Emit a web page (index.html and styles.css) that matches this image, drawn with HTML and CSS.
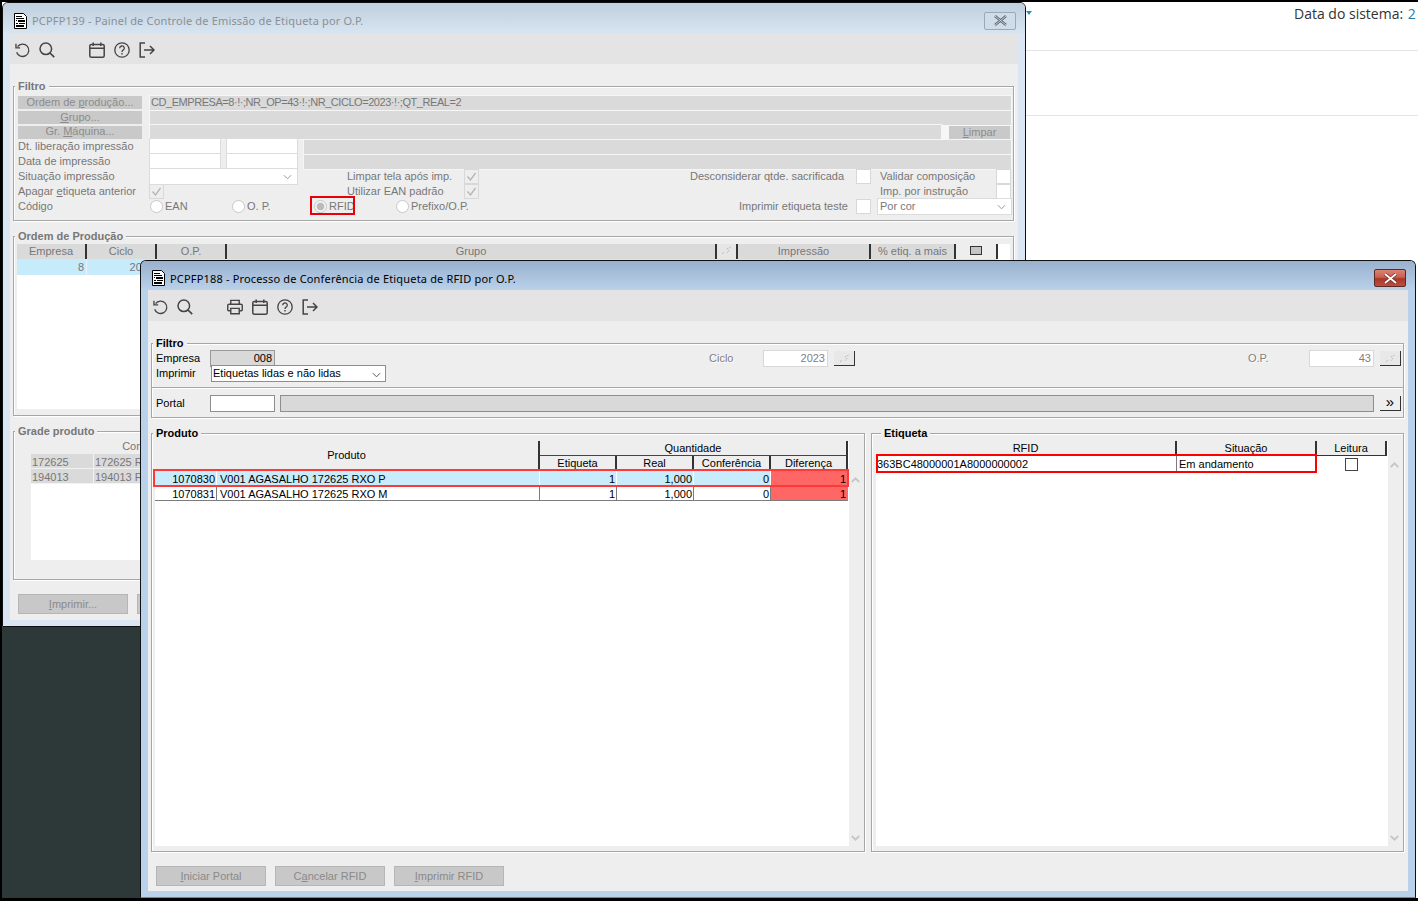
FILE: index.html
```html
<!DOCTYPE html>
<html lang="pt-BR">
<head>
    <meta charset="UTF-8">
    <meta name="viewport" content="width=device-width, initial-scale=1.0">
    <title>PCPFP188</title>
    <link rel="stylesheet" href="styles.css">
</head>
<body>
<svg class="defs" width="0" height="0">
  <symbol id="i-doc" viewBox="0 0 13 16">
    <path d="M.5.5h9l3 3v12H.5z" fill="#fff" stroke="#000"/>
    <path d="M2 3h6v1H2zM2 5h8v1H2zM4 7h7v2H4zM2 7h1v1H2zM2 10h2v1H2zM5 10h6v1H5zM2 12h8v2H2z" fill="#000"/>
  </symbol>
  <symbol id="i-undo" viewBox="0 0 18 16">
    <path d="M4 4.2A7 7 0 1 1 3 10.500" fill="none" stroke="#444" stroke-width="1.500"/>
    <path d="M2.200 1v4.700h4.700" fill="none" stroke="#444" stroke-width="1.500"/>
  </symbol>
  <symbol id="i-search" viewBox="0 0 16 16">
    <circle cx="6.800" cy="6.800" r="5.800" fill="none" stroke="#444" stroke-width="1.500"/>
    <path d="M11 11l4.200 4.200" stroke="#444" stroke-width="1.700"/>
  </symbol>
  <symbol id="i-print" viewBox="0 0 17 16">
    <path d="M4 5V1h9v4M4 12H1.800a1 1 0 0 1-1-1V6.500a1.500 1.500 0 0 1 1.500-1.500h12.400a1.500 1.500 0 0 1 1.500 1.500V11a1 1 0 0 1-1 1H13M4 9.500h9v5.700H4z" fill="none" stroke="#444" stroke-width="1.500"/>
  </symbol>
  <symbol id="i-cal" viewBox="0 0 16 16">
    <rect x=".8" y="2.500" width="14.400" height="12.700" rx="1.500" fill="none" stroke="#444" stroke-width="1.500"/>
    <path d="M1 6.200h14M4.200.5v3.500M11.800.5v3.500" stroke="#444" stroke-width="1.500"/>
  </symbol>
  <symbol id="i-help" viewBox="0 0 16 16">
    <circle cx="8" cy="8" r="7.200" fill="none" stroke="#444" stroke-width="1.300"/>
    <path d="M5.700 6.200a2.300 2.200 0 1 1 3.400 1.900c-.8.500-1.100.9-1.100 1.800" fill="none" stroke="#444" stroke-width="1.300"/>
    <path d="M7.300 11h1.400v1.500H7.300z" fill="#444"/>
  </symbol>
  <symbol id="i-exit" viewBox="0 0 16 16">
    <path d="M6 1H1.200v14H6" fill="none" stroke="#444" stroke-width="1.500"/>
    <path d="M5 8h10M11 4l4 4-4 4" fill="none" stroke="#444" stroke-width="1.500"/>
  </symbol>
  <symbol id="i-up" viewBox="0 0 9 6">
    <path d="M.8 5L4.500 1.300 8.200 5" fill="none" stroke="#c6c6c6" stroke-width="1.800"/>
  </symbol>
  <symbol id="i-down" viewBox="0 0 9 6">
    <path d="M.8 1l3.700 3.700L8.200 1" fill="none" stroke="#c6c6c6" stroke-width="1.800"/>
  </symbol>
  <symbol id="i-check" viewBox="0 0 13 13">
    <path d="M2.500 6.500l3 3.500 5-7" fill="none" stroke="#b5b5b5" stroke-width="1.300"/>
  </symbol>
  <symbol id="i-caret" viewBox="0 0 10 6">
    <path d="M1 1l4 4 4-4" fill="none" stroke="#555" stroke-width="1.100"/>
  </symbol>
  <symbol id="i-wand" viewBox="0 0 11 9">
    <path d="M1 8l2-2M6 3l4-2M8 4L6 7" fill="none" stroke="#ababab" stroke-width="1" stroke-dasharray="1 1"/>
  </symbol>
</svg>

<div class="desk">
  <div class="back-page">
    <div class="back-row back-row-top">Data do sistema: <span class="back-date">2</span></div>
    <div class="back-row back-row-mid"></div>
  </div>
  <div class="back-caret"></div>
  <div class="back-dark"></div>

  <!-- janela de tras -->
  <div class="window win-back">
    <div class="titlebar">
      <svg class="doc-icon"><use href="#i-doc"/></svg>
      <span class="title">PCPFP139 - Painel de Controle de Emissão de Etiqueta por O.P.</span>
      <span class="win-close">
        <svg width="15" height="11" viewBox="0 0 15 11"><path d="M2 1l11 9M13 1L2 10" stroke="#5a6672" stroke-width="2.400"/><path d="M2 1l11 9M13 1L2 10" stroke="#dfe8f0" stroke-width=".8"/></svg>
      </span>
    </div>
    <div class="client">
      <div class="toolbar">
        <svg class="tool"><use href="#i-undo"/></svg>
        <svg class="tool"><use href="#i-search"/></svg>
        <span class="tool"></span>
        <svg class="tool"><use href="#i-cal"/></svg>
        <svg class="tool"><use href="#i-help"/></svg>
        <svg class="tool"><use href="#i-exit"/></svg>
      </div>

      <div class="group filtro-back">
        <div class="group-title">Filtro</div>
        <div class="row">
          <span class="btn-flat"><span>Ordem de <u>p</u>rodução...</span></span>
          <span class="bar bar-long bar-query">CD_EMPRESA=8·!·;NR_OP=43·!·;NR_CICLO=2023·!·;QT_REAL=2</span>
        </div>
        <div class="row">
          <span class="btn-flat"><span><u>G</u>rupo...</span></span>
          <span class="bar bar-long"></span>
        </div>
        <div class="row row-14">
          <span class="btn-flat"><span>Gr. <u>M</u>áquina...</span></span>
          <span class="bar bar-short"></span>
          <span class="btn-limpar"><u>L</u>impar</span>
        </div>
        <div class="row">
          <span class="lbl lbl-132">Dt. liberação impressão</span>
          <span class="input-back"></span>
          <span class="input-back"></span>
          <span class="bar bar-date"></span>
        </div>
        <div class="row">
          <span class="lbl lbl-132">Data de impressão</span>
          <span class="input-back"></span>
          <span class="input-back"></span>
          <span class="bar bar-date"></span>
        </div>
        <div class="opts">
          <span class="lbl c18">Situação impressão</span>
          <span class="select-back c150"><svg class="caret"><use href="#i-caret"/></svg></span>
          <span class="lbl c347">Limpar tela após imp.</span>
          <span class="check c465"><svg><use href="#i-check"/></svg></span>
          <span class="lbl c690">Desconsiderar qtde. sacrificada</span>
          <span class="check c857"></span>
          <span class="lbl c880">Validar composição</span>
          <span class="check c997"></span>

          <span class="lbl c18">Apagar <u>e</u>tiqueta anterior</span>
          <span class="check c150"><svg><use href="#i-check"/></svg></span>
          <span class="lbl c347"><u>U</u>tilizar EAN padrão</span>
          <span class="check c465"><svg><use href="#i-check"/></svg></span>
          <span class="lbl c880">Imp. por instrução</span>
          <span class="check c997"></span>

          <span class="lbl c18">Código</span>
          <span class="radio c150"><i></i>EAN</span>
          <span class="radio c232"><i></i>O. P.</span>
          <span class="radio radio-marked c314"><i class="on"></i>RFID</span>
          <span class="radio c396"><i></i>Prefixo/O.P.</span>
          <span class="lbl c739">Imprimir etiqueta teste</span>
          <span class="check c857"></span>
          <span class="select-back select-cor c880">Por cor<svg class="caret"><use href="#i-caret"/></svg></span>
        </div>
      </div>

      <div class="group ordem-back">
        <div class="group-title">Ordem de Produção</div>
        <div class="ordem-white">
          <table class="grid-back">
            <colgroup><col class="w70"><col class="w70"><col class="w70"><col class="w490"><col class="w21"><col class="w133"><col class="w85"><col class="w42"></colgroup>
            <tr>
              <th>Empresa</th><th>Ciclo</th><th>O.P.</th><th>Grupo</th>
              <th class="th-pick"><svg class="wand"><use href="#i-wand"/></svg></th><th>Impressão</th><th>% etiq. a mais</th>
              <th class="th-light"><span class="mini-box"></span></th>
            </tr>
            <tr class="sel-back"><td class="num">8</td><td class="num">2023</td><td></td><td></td><td></td><td></td><td></td><td></td></tr>
          </table>
        </div>
      </div>

      <div class="group grade-back">
        <div class="group-title">Grade produto</div>
        <div class="grade-white">
          <div class="grade-head">Cor</div>
          <div class="grade-row"><span>172625</span><span>172625 RXO</span></div>
          <div class="grade-row"><span>194013</span><span>194013 PRT</span></div>
        </div>
      </div>

      <div class="btn-row-back">
        <span class="btn-off"><span><u>I</u>mprimir...</span></span>
        <span class="btn-off"></span>
      </div>
    </div>
  </div>

  <!-- janela da frente -->
  <div class="window win-front">
    <div class="titlebar">
      <svg class="doc-icon"><use href="#i-doc"/></svg>
      <span class="title">PCPFP188 - Processo de Conferência de Etiqueta de RFID por O.P.</span>
      <span class="win-close win-close-red">
        <svg width="15" height="11" viewBox="0 0 15 11"><path d="M2 1l11 9M13 1L2 10" stroke="#6e2a22" stroke-width="3.200"/><path d="M2 1l11 9M13 1L2 10" stroke="#fff" stroke-width="1.800"/></svg>
      </span>
    </div>
    <div class="client">
      <div class="toolbar">
        <svg class="tool"><use href="#i-undo"/></svg>
        <svg class="tool"><use href="#i-search"/></svg>
        <span class="tool"></span>
        <svg class="tool"><use href="#i-print"/></svg>
        <svg class="tool"><use href="#i-cal"/></svg>
        <svg class="tool"><use href="#i-help"/></svg>
        <svg class="tool"><use href="#i-exit"/></svg>
      </div>

      <div class="front-body">
        <div class="group filtro-front">
          <div class="group-title">Filtro</div>
          <div class="row">
            <span class="lbl-front">Empresa</span>
            <span class="field field-empresa">008</span>
            <span class="lbl-off ciclo-lbl">Ciclo</span>
            <span class="field field-off">2023</span>
            <span class="pick"><svg class="wand"><use href="#i-wand"/></svg></span>
            <span class="lbl-off op-lbl">O.P.</span>
            <span class="field field-off">43</span>
            <span class="pick"><svg class="wand"><use href="#i-wand"/></svg></span>
          </div>
          <div class="row">
            <span class="lbl-front">Imprimir</span>
            <span class="select-front">Etiquetas lidas e não lidas<svg class="caret"><use href="#i-caret"/></svg></span>
          </div>
        </div>

        <div class="group portal">
          <div class="row">
            <span class="lbl-front">Portal</span>
            <span class="field field-portal"></span>
            <span class="field field-desc"></span>
            <span class="pick pick-on">»</span>
          </div>
        </div>

        <div class="panels">
          <div class="group panel panel-produto">
            <div class="group-title">Produto</div>
            <div class="grid-wrap">
              <table class="grid grid-produto">
                <colgroup><col class="w62"><col class="w323"><col class="w77"><col class="w77"><col class="w77"><col class="w77"></colgroup>
                <tr>
                  <th colspan="2" rowspan="2" class="th-plain">Produto</th>
                  <th colspan="4" class="th-group">Quantidade</th>
                </tr>
                <tr>
                  <th>Etiqueta</th><th>Real</th><th>Conferência</th><th>Diferença</th>
                </tr>
                <tr class="sel">
                  <td class="num">1070830</td><td>V001 AGASALHO 172625 RXO P</td>
                  <td class="num">1</td><td class="num">1,000</td><td class="num">0</td><td class="num diff">1</td>
                </tr>
                <tr>
                  <td class="num">1070831</td><td>V001 AGASALHO 172625 RXO M</td>
                  <td class="num">1</td><td class="num">1,000</td><td class="num">0</td><td class="num diff">1</td>
                </tr>
              </table>
              <div class="mark mark-produto"></div>
            </div>
            <div class="scroll scroll-produto">
              <svg><use href="#i-up"/></svg>
              <svg><use href="#i-down"/></svg>
            </div>
          </div>

          <div class="group panel panel-etiqueta">
            <div class="group-title">Etiqueta</div>
            <div class="grid-wrap">
              <table class="grid grid-etiqueta">
                <colgroup><col class="w301"><col class="w140"><col class="w70"></colgroup>
                <tr><th>RFID</th><th>Situação</th><th>Leitura</th></tr>
                <tr>
                  <td>363BC48000001A8000000002</td><td>Em andamento</td>
                  <td class="td-check"><span class="check-front"></span></td>
                </tr>
              </table>
              <div class="mark mark-etiqueta"></div>
            </div>
            <div class="scroll scroll-etiqueta">
              <svg><use href="#i-up"/></svg>
              <svg><use href="#i-down"/></svg>
            </div>
          </div>
        </div>

        <div class="btn-row-front">
          <span class="btn-off"><span><u>I</u>niciar Portal</span></span>
          <span class="btn-off"><span>C<u>a</u>ncelar RFID</span></span>
          <span class="btn-off"><span><u>I</u>mprimir RFID</span></span>
        </div>
      </div>
    </div>
  </div>
</div>
</body>
</html>
```

FILE: styles.css
```css
* {
  margin: 0;
  padding: 0;
  box-sizing: border-box;
}
html, body {
  width: 1418px;
  height: 901px;
  overflow: hidden;
  background: #fff;
}
body {
  font-family: "Liberation Sans", Arial, sans-serif;
  font-size: 11px;
  color: #000;
}
.defs {
  position: absolute;
}
.desk {
  position: relative;
  width: 1418px;
  height: 901px;
  border-top: 2px solid #000;
  border-left: 2px solid #000;
  border-bottom: 3px solid #000;
  overflow: hidden;
}

/* pagina atras das janelas */
.back-row {
  border-bottom: 1px solid #e4e4e4;
  margin-left: 1024px;
}
.back-row-top {
  height: 49px;
  padding: 4px 0 0 268px;
  font-family: "Open Sans", sans-serif;
  font-size: 14px;
  line-height: 16px;
  color: #333;
  white-space: nowrap;
}
.back-date {
  margin-left: 1px;
  color: #1c7fb0;
}
.back-row-mid {
  height: 65px;
}
.back-caret {
  position: absolute;
  left: 1024px;
  top: 9px;
  border: 3px solid transparent;
  border-top: 4px solid #2b8fb5;
}
.back-dark {
  position: absolute;
  left: 0;
  top: 625px;
  width: 139px;
  height: 280px;
  background: #2d3838;
}

/* janelas */
.window {
  position: absolute;
  display: flex;
  flex-direction: column;
  border: 1px solid #111;
  border-radius: 6px 6px 0 0;
}
.win-back {
  left: 0;
  top: 0;
  width: 1024px;
  height: 625px;
  background: #dae6f3;
}
.win-front {
  left: 138px;
  top: 258px;
  width: 1276px;
  height: 638px;
  background: #b9d1ea;
  border-bottom-color: #23a5b8;
}
.titlebar {
  display: flex;
  align-items: center;
  flex: none;
  padding: 5px 9px 0 11px;
  border-radius: 5px 5px 0 0;
}
.win-back .titlebar {
  height: 30px;
  background: linear-gradient(#c0cfdd, #d7e4f1);
}
.win-front .titlebar {
  height: 29px;
  background: linear-gradient(#99b1cd, #b9d1ea);
}
.doc-icon {
  width: 13px;
  height: 16px;
  flex: none;
  margin-right: 5px;
}
.title {
  font-family: "Noto Sans", sans-serif;
  font-size: 11px;
  letter-spacing: .17px;
  white-space: nowrap;
}
.win-back .title {
  color: #8b8f94;
}
.win-close {
  display: flex;
  align-items: center;
  justify-content: center;
  width: 32px;
  height: 18px;
  margin-left: auto;
  border: 1px solid #9aa9b8;
  border-radius: 2px;
  background: #cfdce9;
}
.win-close-red {
  border-color: #5c2a26;
  background: linear-gradient(#dc8273 0, #c9604f 45%, #a8372a 55%, #bd4f3e);
}
.client {
  display: flex;
  flex-direction: column;
  flex: 1;
  min-height: 0;
  margin: 0 7px 6px;
  background: #eee;
  overflow: hidden;
}
.toolbar {
  display: flex;
  flex: none;
  height: 31px;
  padding: 9px 0 0 4px;
  background: #e4e4e4;
}
.tool {
  display: block;
  width: 16px;
  height: 16px;
  margin-right: 9px;
  flex: none;
}

/* grupos */
.group {
  position: relative;
  border: 1px solid #a6a6a6;
  box-shadow: inset 1px 1px 0 #fff, 1px 1px 0 #fff;
}
.group-title {
  position: absolute;
  left: 1px;
  top: -8px;
  padding: 0 3px;
  background: #eee;
  font-weight: bold;
  line-height: 14px;
}
.win-back .group-title {
  color: #777;
}
.row {
  display: flex;
  align-items: center;
  height: 15px;
  white-space: nowrap;
}
.row-14 {
  height: 14px;
}
u {
  text-decoration: underline;
}

/* janela de tras: filtro */
.win-back .lbl,
.win-back .bar,
.win-back .select-back,
.win-back .radio {
  color: #777;
}
.filtro-back {
  height: 135px;
  margin: 22px 0 0 3px;
  width: 1001px;
  padding: 8px 0 0 4px;
}
.btn-flat {
  display: flex;
  align-items: center;
  justify-content: center;
  width: 124px;
  height: 13px;
  flex: none;
  padding-bottom: 2px;
  background: #c9c9c9;
  color: #8c8c8c;
}
.bar {
  display: block;
  height: 14px;
  line-height: 13px;
  padding-left: 1px;
  background: #dadada;
  box-shadow: 0 0 0 1px #f6f6f6;
  flex: none;
}
.bar-query {
  letter-spacing: -.45px;
}
.bar-long {
  width: 861px;
  margin-left: 8px;
}
.bar-short {
  width: 791px;
  margin-left: 8px;
}
.bar-date {
  width: 707px;
  margin-left: 7px;
}
.btn-limpar {
  width: 61px;
  height: 13px;
  margin-left: 8px;
  background: #c9c9c9;
  color: #8c8c8c;
  line-height: 13px;
  text-align: center;
  box-shadow: -8px 0 0 #f6f6f6;
}
.lbl {
  white-space: nowrap;
  line-height: 15px;
}
.lbl-132 {
  width: 132px;
  flex: none;
}
.input-back {
  width: 70px;
  height: 15px;
  margin-right: 7px;
  flex: none;
  background: #fff;
  box-shadow: 0 0 0 1px #dcdcdc;
}
.input-back + .bar {
  margin-left: 0;
}
.opts {
  display: grid;
  grid-template-columns:
    [c18] 132px [c150] 82px [c232] 82px [c314] 33px [c347] 49px [c396] 69px
    [c465] 225px [c690] 49px [c739] 118px [c857] 23px [c880] 117px [c997] 14px;
  grid-auto-rows: 15px;
  align-items: center;
}
.c18 { grid-column-start: c18; }
.c150 { grid-column-start: c150; }
.c232 { grid-column-start: c232; }
.c314 { grid-column-start: c314; }
.c347 { grid-column-start: c347; }
.c396 { grid-column-start: c396; }
.c465 { grid-column-start: c465; }
.c690 { grid-column-start: c690; }
.c739 { grid-column-start: c739; }
.c857 { grid-column-start: c857; }
.c880 { grid-column-start: c880; }
.c997 { grid-column-start: c997; }
.check {
  display: block;
  width: 13px;
  height: 13px;
  background: #fff;
  box-shadow: 0 0 0 1px #d8d8d8;
}
.check svg {
  display: block;
  width: 13px;
  height: 13px;
}
.win-back .check:has(svg) {
  background: #eee;
}
.select-back {
  position: relative;
  width: 147px;
  height: 15px;
  line-height: 15px;
  padding-left: 2px;
  background: #fff;
  box-shadow: 0 0 0 1px #dcdcdc;
}
.select-cor {
  width: 133px;
  margin-left: -2px;
}
.caret {
  position: absolute;
  right: 5px;
  top: 5px;
  width: 9px;
  height: 6px;
  opacity: .6;
}
.radio {
  position: relative;
  display: flex;
  align-items: flex-start;
  gap: 2px;
  width: max-content;
  line-height: 12px;
  white-space: nowrap;
}
.radio i {
  display: block;
  flex: none;
  width: 13px;
  height: 13px;
  border: 1px solid #c8c8c8;
  border-radius: 50%;
  background: #fff;
}
.radio i.on {
  background: radial-gradient(circle, #bbb 0 3.500px, #f4f4f4 4.200px);
}
.radio-marked::after {
  content: "";
  box-sizing: border-box;
  position: absolute;
  left: -4px;
  top: -4px;
  width: 45px;
  height: 19px;
  border: 2px solid #e8000b;
}

/* janela de tras: grades */
.ordem-back {
  height: 180px;
  width: 1001px;
  margin: 15px 0 0 3px;
  padding: 7px 3px 0;
}
.ordem-white {
  height: 165px;
  background: #fff;
}
table {
  border-collapse: separate;
  border-spacing: 0;
  table-layout: fixed;
}
.wand {
  display: block;
  width: 11px;
  height: 9px;
  margin: 0 auto;
}
.grid-back th {
  height: 15px;
  padding-bottom: 2px;
  background: #dadada;
  border-right: 2px solid #333;
  font-weight: normal;
  color: #777;
}
.grid-back .th-pick {
  background: #e6e6e6;
}
.grid-back .th-light {
  background: #eee;
}
.mini-box {
  display: block;
  width: 12px;
  height: 9px;
  margin: 0 auto;
  background: #c4c4c4;
  border: 1px solid #333;
}
.grid-back td {
  height: 16px;
  background: #c6ecfb;
  border-right: 1px solid #eef;
  color: #777;
  padding: 0 2px;
}
.num {
  text-align: right;
}
.w21 { width: 21px; }
.w42 { width: 42px; }
.w62 { width: 62px; }
.w70 { width: 70px; }
.w77 { width: 77px; }
.w85 { width: 85px; }
.w133 { width: 133px; }
.w140 { width: 140px; }
.w301 { width: 301px; }
.w323 { width: 323px; }
.w490 { width: 490px; }
.grade-back {
  height: 149px;
  width: 1001px;
  margin: 15px 0 0 3px;
  padding: 8px 0 0 17px;
}
.grade-white {
  width: 300px;
  height: 120px;
  background: #fff;
  color: #777;
}
.grade-head {
  width: 200px;
  height: 14px;
  line-height: 12px;
  text-align: center;
  background: #eee;
}
.grade-row {
  display: flex;
  height: 15px;
  line-height: 16px;
  border-bottom: 1px solid #f2f2f2;
}
.grade-row span {
  padding-left: 1px;
  background: #dadada;
  border-right: 1px solid #f2f2f2;
  white-space: nowrap;
}
.grade-row span:first-child {
  width: 63px;
}
.grade-row span:last-child {
  width: 137px;
}
.btn-row-back {
  display: flex;
  gap: 9px;
  margin: 14px 0 0 8px;
}
.btn-off {
  display: flex;
  align-items: center;
  justify-content: center;
  width: 110px;
  height: 20px;
  flex: none;
  background: #c8c8c8;
  border: 1px solid #b6b6b6;
  color: #8a8a8a;
}

/* janela da frente */
.front-body {
  padding: 22px 4px 0 3px;
}
.filtro-front {
  height: 45px;
  padding: 7px 2px 0 4px;
}
.lbl-front {
  width: 54px;
  flex: none;
  padding-bottom: 2px;
}
.lbl-off {
  color: #808080;
  text-shadow: 1px 1px 0 #fff;
  flex: none;
  padding-bottom: 2px;
}
.ciclo-lbl {
  margin-left: 434px;
  width: 54px;
}
.op-lbl {
  margin-left: 393px;
  width: 61px;
}
.field {
  display: block;
  height: 17px;
  line-height: 17px;
  padding-right: 2px;
  text-align: right;
  flex: none;
}
.field-empresa {
  width: 65px;
  background: #d9d9d9;
  border: 1px solid #9a9a9a;
  line-height: 15px;
}
.field-off {
  width: 65px;
  background: #fff;
  border: 1px solid #d8d8d8;
  color: #808080;
  line-height: 15px;
}
.pick {
  display: flex;
  align-items: center;
  justify-content: center;
  width: 21px;
  height: 15px;
  margin-left: 6px;
  flex: none;
  background: #e8e8e8;
  border-right: 1px solid #333;
  border-bottom: 1px solid #333;
}
.pick-on {
  padding-bottom: 3px;
  color: #000;
  font-size: 15px;
  background: #eee;
}
.select-front {
  position: relative;
  width: 175px;
  height: 17px;
  margin-left: 1px;
  padding-left: 1px;
  line-height: 15px;
  background: #fff;
  border: 1px solid #8e8e8e;
}
.select-front .caret {
  right: 4px;
  top: 6px;
  opacity: 1;
}
.portal {
  height: 31px;
  margin-top: -1px;
  padding: 8px 2px 0 4px;
}
.field-portal {
  width: 65px;
  background: #fff;
  border: 1px solid #8e8e8e;
}
.field-desc {
  width: 1094px;
  margin-left: 5px;
  background: #d9d9d9;
  border: 1px solid #8e8e8e;
}
.panels {
  display: flex;
  gap: 6px;
  margin-top: 15px;
  height: 419px;
}
.panel {
  display: flex;
  padding: 7px 0 5px 3px;
}
.panel-produto {
  width: 714px;
}
.panel-etiqueta {
  width: 533px;
  padding-left: 4px;
}
.panel-etiqueta .group-title {
  left: 9px;
}
.grid-wrap {
  position: relative;
  background: #fff;
  flex: none;
}
.panel-produto .grid-wrap {
  width: 694px;
}
.panel-etiqueta .grid-wrap {
  width: 512px;
}
.grid th {
  height: 15px;
  background: #eee;
  border-right: 2px solid #333;
  border-bottom: 1px solid #333;
  font-weight: normal;
  line-height: 14px;
}
.grid .th-plain {
  border-bottom: 0;
  padding-bottom: 2px;
}
.grid .th-group {
  border-bottom: 1px solid #444;
}
.grid td {
  height: 15px;
  padding: 2px 1px 0 3px;
  border-right: 1px solid #7c7c7c;
  border-bottom: 1px solid #7c7c7c;
  line-height: 12px;
  white-space: nowrap;
  overflow: hidden;
}
.sel td {
  background: #c8ecfc;
  border-right-color: #fff;
}
.grid td.diff {
  background: #ff6666;
  border-right-color: #ff6666;
}
.grid-etiqueta td {
  height: 16px;
  padding: 0 1px;
  line-height: 14px;
  border-bottom: 0;
  border-right: 1px solid #7c7c7c;
}
.grid-etiqueta td + td {
  padding-left: 2px;
}
.grid-etiqueta td:last-child {
  border-right: 0;
  padding-left: 1px;
}
.td-check {
  text-align: left;
}
.check-front {
  display: block;
  width: 13px;
  height: 13px;
  margin-left: 27px;
  background: #fff;
  border: 1px solid #444;
}
.mark {
  position: absolute;
  pointer-events: none;
}
.mark-produto {
  left: -2px;
  top: 28px;
  width: 696px;
  height: 18px;
  border: 2px solid #ff3838;
}
.mark-etiqueta {
  left: 0;
  top: 13px;
  width: 441px;
  height: 19px;
  border: 2px solid #f00;
}
.scroll {
  display: flex;
  flex-direction: column;
  justify-content: space-between;
  align-items: center;
  flex: none;
  width: 13px;
  padding-bottom: 5px;
}
.scroll svg {
  display: block;
  width: 9px;
  height: 6px;
}
.scroll-produto {
  padding-top: 36px;
}
.scroll-etiqueta {
  padding-top: 21px;
}
.btn-row-front {
  display: flex;
  gap: 9px;
  margin: 14px 0 0 5px;
}
```
